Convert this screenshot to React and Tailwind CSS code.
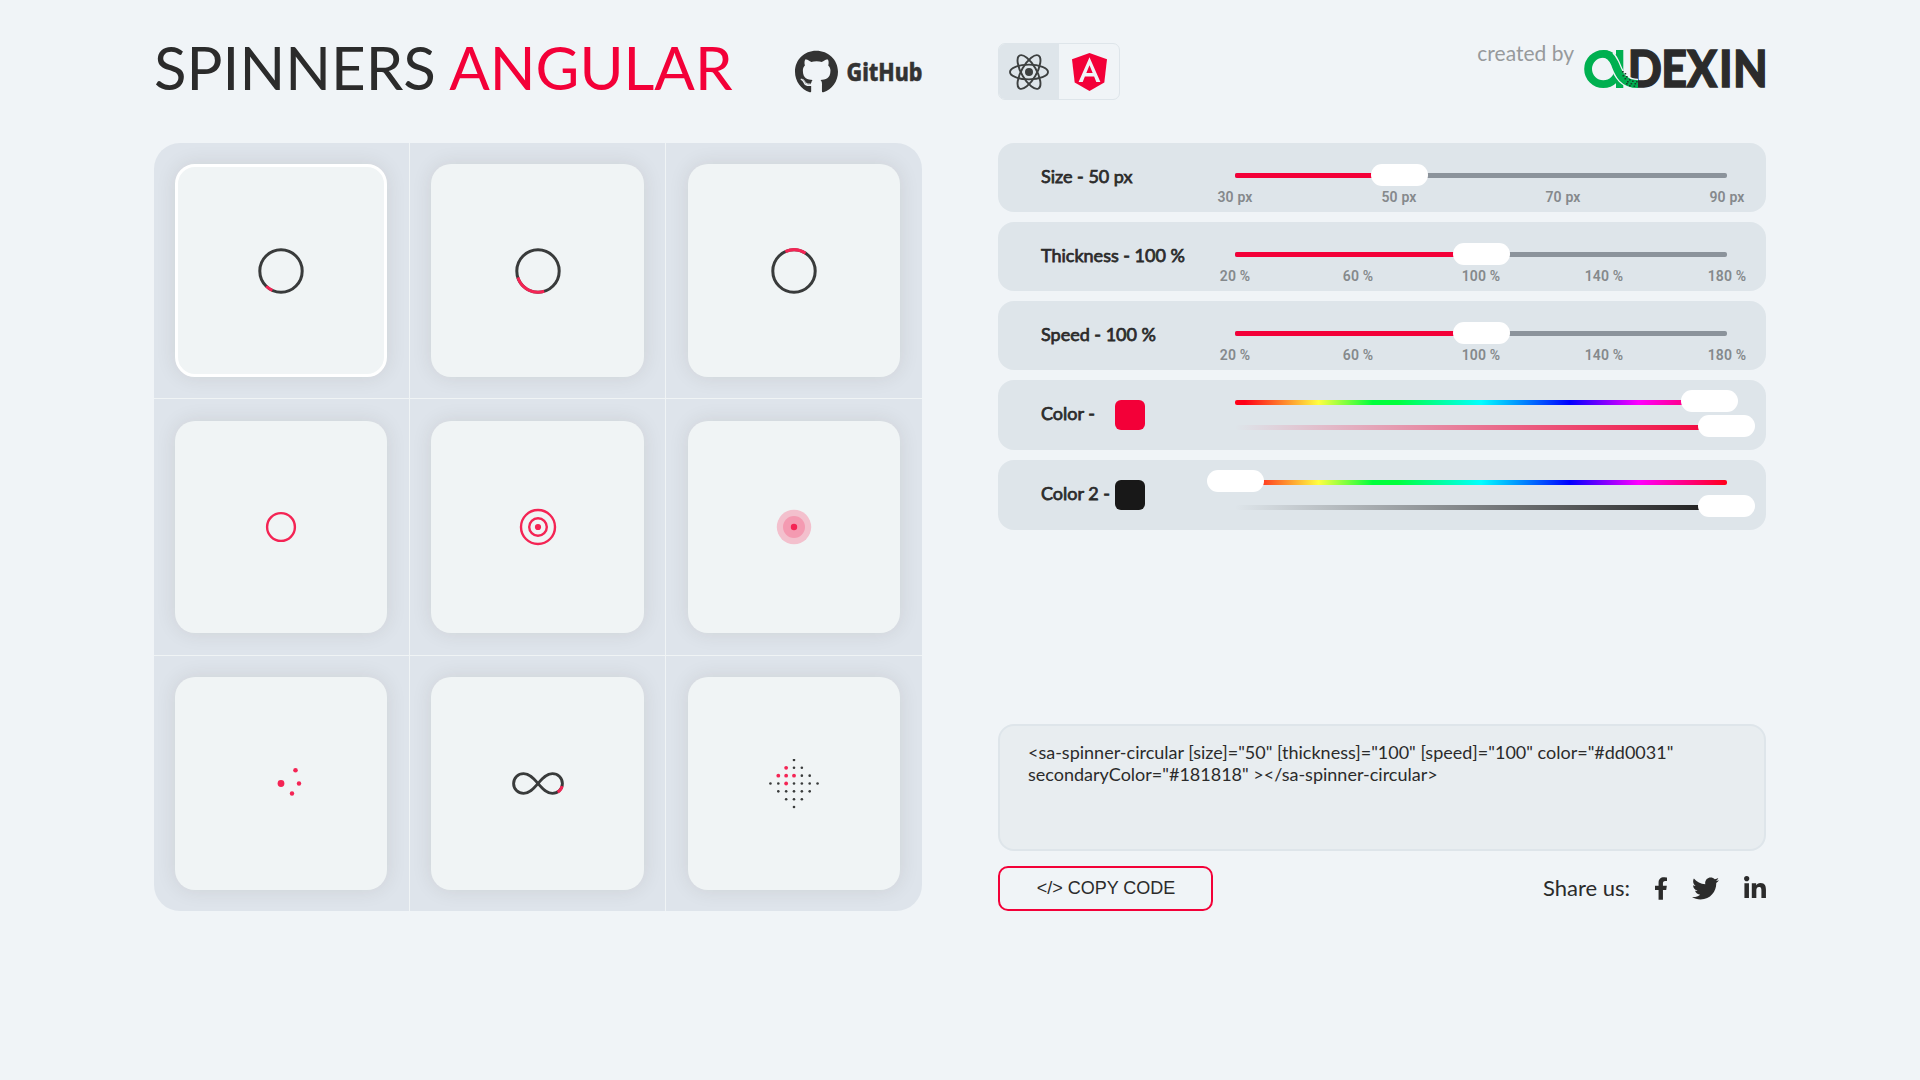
import React from "react";
import { FaFacebookF, FaLinkedinIn, FaTwitter, FaGithub } from "react-icons/fa";

const RED = "#f42454";
const DARK = "#393b3b";

const rad = (d) => (d * Math.PI) / 180;

function Ring({ from, to }) {
  const r = 21.2;
  const x1 = 25 + r * Math.cos(rad(from));
  const y1 = 25 + r * Math.sin(rad(from));
  const x2 = 25 + r * Math.cos(rad(to));
  const y2 = 25 + r * Math.sin(rad(to));
  return (
    <svg width="50" height="50" viewBox="0 0 50 50" fill="none" strokeWidth="3">
      <circle cx="25" cy="25" r={r} stroke={DARK} />
      <path d={`M${x1} ${y1}A${r} ${r} 0 0 1 ${x2} ${y2}`} stroke={RED} />
    </svg>
  );
}

function DotMatrix() {
  const red = ["-1,-2", "-2,-1", "-1,-1", "0,-1", "-1,0"];
  const dots = [];
  for (let y = -3; y <= 3; y++) {
    for (let x = -3; x <= 3; x++) {
      if (Math.abs(x) + Math.abs(y) <= 3) dots.push([x, y]);
    }
  }
  return (
    <svg width="50" height="50" viewBox="-25 -24.5 50 50">
      {dots.map(([x, y]) => {
        const on = red.includes(`${x},${y}`);
        return <circle key={`${x},${y}`} cx={x * 7.85} cy={y * 7.85} r={on ? 1.9 : 1.3} fill={on ? RED : DARK} />;
      })}
    </svg>
  );
}

const spinners = [
  <Ring from={114} to={134} />,
  <Ring from={73} to={162} />,
  <Ring from={246} to={303} />,
  <svg width="50" height="50" viewBox="-25 -25 50 50" fill="none">
    <circle r="13.9" stroke={RED} strokeWidth="2.4" />
  </svg>,
  <svg width="50" height="50" viewBox="-25 -25 50 50" fill="none" stroke={RED} strokeWidth="2.4">
    <circle r="17" />
    <circle r="8.8" />
    <circle r="3.1" fill={RED} stroke="none" />
  </svg>,
  <svg width="50" height="50" viewBox="-25 -25 50 50">
    <circle r="17.2" fill="#f3c0cd" />
    <circle r="11" fill="#f49ab1" />
    <circle r="3.2" fill={RED} />
  </svg>,
  <svg width="50" height="50" viewBox="-25 -24.5 50 50" fill={RED}>
    <circle r="3.4" />
    <circle cx="14.5" cy="-13.3" r="2.3" />
    <circle cx="18" cy="0" r="2.2" />
    <circle cx="11" cy="10" r="2.2" />
  </svg>,
  <svg className="overflow-visible" width="50" height="50" viewBox="-25 -24.5 50 50" fill="none" strokeWidth="2.9">
    <path
      d="M0 0C-4 -4.5 -8 -9.9 -14.4 -9.9C-20 -9.9 -24.4 -5.5 -24.4 0C-24.4 5.5 -20 9.9 -14.4 9.9C-8 9.9 -4 4.5 0 0C4 -4.5 8 -9.9 14.4 -9.9C20 -9.9 24.4 -5.5 24.4 0C24.4 5.5 20 9.9 14.4 9.9C8 9.9 4 4.5 0 0Z"
      stroke={DARK}
    />
    <path d="M24.1 2.6C23.5 5.2 22 7.3 19.6 8.6" stroke={RED} />
  </svg>,
  <DotMatrix />,
];

const cellCols = ["border-r pr-px", "border-r", ""];
const cellRows = ["border-b", "border-b", ""];
const cardWidths = ["w-[212px]", "w-[213px]", "w-[212px]"];
const cardHeights = ["h-[213px]", "h-[212px]", "h-[213px]"];

function Cell({ i }) {
  const col = i % 3;
  const row = Math.floor(i / 3);
  return (
    <div className={`flex items-center justify-center border-[#f0f4f5] ${cellCols[col]} ${cellRows[row]}`}>
      <div
        className={`flex items-center justify-center rounded-[20px] bg-[#f0f4f5] shadow-[0_0_20px_rgba(60,50,40,0.1)] ${cardWidths[col]} ${cardHeights[row]} ${i === 0 ? "border-[3px] border-white" : ""}`}
      >
        {spinners[i]}
      </div>
    </div>
  );
}

function Handle({ left, top }) {
  return <div className="absolute h-[22px] w-[57px] rounded-[11px] bg-white" style={{ left, top }} />;
}

function Slider({ at, left, ticks }) {
  return (
    <div className="flex w-[492px] flex-col pt-[30px]">
      <div className="relative h-[5px] rounded-[2px] bg-[#8b939b]">
        <div className="h-full rounded-[2px] bg-[#f30038]" style={{ width: `${at}%` }} />
        <Handle left={left} top={-9} />
      </div>
      <div className="mt-[10px] flex justify-between">
        {ticks.map((t) => (
          <span key={t} className="flex w-0 justify-center whitespace-nowrap font-['Roboto',sans-serif] text-[14px] leading-[18px] font-semibold tracking-[0.15px] text-[#85898c]">
            {t}
          </span>
        ))}
      </div>
    </div>
  );
}

function Label({ children }) {
  return (
    <span className="text-[18px] leading-[22px] whitespace-pre text-[#2b2b2b] [-webkit-text-stroke:0.75px_#2b2b2b]">
      {children}
    </span>
  );
}

function SliderRow({ label, at, left, ticks }) {
  return (
    <div className="flex h-[69px] justify-between rounded-[16px] bg-[#dee5ea] pr-[39px] pl-[43px]">
      <div className="pt-[22px]">
        <Label>{label}</Label>
      </div>
      <Slider at={at} left={left} ticks={ticks} />
    </div>
  );
}

function ColorRow({ label, swatch, left, fade }) {
  return (
    <div className="flex h-[70px] justify-between rounded-[16px] bg-[#dee5ea] pr-[39px] pl-[43px]">
      <div className="flex pt-5">
        <div className="w-[74px] pt-[2px]">
          <Label>{label}</Label>
        </div>
        <div className={`h-[30px] w-[30px] rounded-[6px] ${swatch}`} />
      </div>
      <div className="flex w-[492px] flex-col gap-5 pt-5">
        <div className="relative h-[5px] rounded-[2px] bg-[linear-gradient(90deg,#ff0018_0%,#ff0018_2%,#ffff40_17%,#00ff3c_28%,#00ff3c_33%,#00ffff_50%,#0000ff_68%,#ff00ff_82%,#ff0018_100%)]">
          <Handle left={left} top={-10} />
        </div>
        <div className={`relative h-[5px] rounded-[2px] ${fade}`}>
          <Handle left={463} top={-10} />
        </div>
      </div>
    </div>
  );
}

const speckles = [
  [38, 21], [40.5, 23], [38.5, 25], [42, 26], [40.5, 28], [45, 29], [43, 31],
  [48, 30.5], [46.5, 33], [50.5, 33], [45, 35], [49.5, 35.5], [52, 31], [42, 33],
];

function AdexinLogo() {
  return (
    <svg width="182" height="38" viewBox="0 0 182 38" className="overflow-visible">
      <text
        transform="scale(0.88 1)"
        x="49.6 87.8 116.8 153.3 169.3"
        y="37.4"
        fontFamily="Lato, sans-serif"
        fontWeight="900"
        fontSize="51"
        fill="#2b2b2b"
        stroke="#2b2b2b"
        strokeWidth="1.3"
      >
        DEXIN
      </text>
      <circle cx="19.3" cy="19" r="15.2" fill="none" stroke="#00b050" strokeWidth="7.8" />
      <path d="M32 0H39.3V38H32Z" fill="#00b050" />
      <path d="M26 6C29 9 30.5 13 32.5 18C36 27 42 34 54 34" fill="none" stroke="#f0f4f7" strokeWidth="10.4" />
      <path
        d="M19.3 3.8C24 3.8 28 7.5 30.5 13C34 21 37 34.1 54 34.1"
        fill="none"
        stroke="#00b050"
        strokeWidth="7.8"
      />
      <g fill="#17402a">
        {speckles.map(([x, y]) => (
          <rect key={`${x}-${y}`} x={x} y={y} width="1.7" height="1.5" />
        ))}
      </g>
    </svg>
  );
}

function ReactIcon() {
  return (
    <svg width="40" height="38" viewBox="-20 -19 40 38" fill="none" stroke="#3d4040" strokeWidth="1.9">
      <ellipse rx="19" ry="7.4" />
      <ellipse rx="19" ry="7.4" transform="rotate(60)" />
      <ellipse rx="19" ry="7.4" transform="rotate(120)" />
      <circle r="4" fill="#3d4040" stroke="none" />
    </svg>
  );
}

function AngularIcon() {
  return (
    <svg width="35" height="38" viewBox="0 0 35 38">
      <path d="M17.5 0L35 6.2L32.3 29.5L17.5 38L2.7 29.5L0 6.2Z" fill="#f30038" />
      <path d="M17.5 4.3L6.6 29H10.7L12.9 23.4H22.1L24.3 29H28.4ZM17.5 12.2L20.7 20H14.3Z" fill="#f0f4f7" fillRule="evenodd" />
    </svg>
  );
}

const percent = ["20 %", "60 %", "100 %", "140 %", "180 %"];

export default function App() {
  return (
    <div className="h-[1080px] w-[1920px] overflow-hidden bg-[#f0f4f7] font-['Lato',sans-serif] text-[#2b2b2b]">
      <div className="flex gap-[76px] pl-[154px]">
        <div className="w-[768px]">
          <header className="flex h-[143px] items-start justify-between">
            <h1 className="pt-[31px] text-[60px] leading-[72px] whitespace-nowrap">
              SPINNERS <span className="text-[#f30038]">ANGULAR</span>
            </h1>
            <div className="flex gap-[9px] pt-[50px]">
              <FaGithub className="h-[44px] w-[43px] text-[#333333]" preserveAspectRatio="none" />
              <svg width="75" height="44" viewBox="0 0 75 44" className="overflow-visible">
                <text
                  x="-0.5"
                  y="31"
                  textLength="76"
                  lengthAdjust="spacingAndGlyphs"
                  fontFamily="Noto Sans, sans-serif"
                  fontWeight="800"
                  fontSize="25.5"
                  fill="#333333"
                  stroke="#333333"
                  strokeWidth="0.5"
                >
                  GitHub
                </text>
              </svg>
            </div>
          </header>
          <div className="grid h-[768px] grid-cols-[256px_256px_256px] grid-rows-[256px_257px_255px] overflow-hidden rounded-[26px] bg-[#dee4eb]">
            {spinners.map((_, i) => (
              <Cell key={i} i={i} />
            ))}
          </div>
        </div>

        <div className="flex w-[768px] flex-col">
          <header className="flex h-[143px] items-start justify-between pt-[43px]">
            <div className="flex h-[57px] w-[122px] overflow-hidden rounded-[7px] border border-[#dee5ea]">
              <div className="flex w-[60px] items-center justify-center bg-[#dee5ea]">
                <ReactIcon />
              </div>
              <div className="flex w-[60px] items-center justify-center">
                <AngularIcon />
              </div>
            </div>
            <div className="flex gap-[10px]">
              <span className="-mt-[2px] text-[21px] leading-6 text-[#979a9c]">created by</span>
              <div className="pt-[7px]">
                <AdexinLogo />
              </div>
            </div>
          </header>
          <div className="flex flex-col gap-[10px]">
            <SliderRow label="Size - 50 px" at={33.33} left={136} ticks={["30 px", "50 px", "70 px", "90 px"]} />
            <SliderRow label="Thickness - 100 %" at={50} left={218} ticks={percent} />
            <SliderRow label="Speed - 100 %" at={50} left={218} ticks={percent} />
            <ColorRow label="Color -" swatch="bg-[#f30038]" left={446} fade="bg-[linear-gradient(90deg,#f3003800,#f30038)]" />
            <ColorRow label="Color 2 -" swatch="bg-[#181818]" left={-28} fade="bg-[linear-gradient(90deg,#18181800,#181818)]" />
          </div>
          <div className="mt-[194px] h-[127px] rounded-[16px] border-2 border-[#dee5ea] bg-[#e8edf0] pt-[15px] pl-[28px] text-[18px] leading-[22px]">
            <div className="whitespace-nowrap">{'<sa-spinner-circular [size]="50" [thickness]="100" [speed]="100" color="#dd0031"'}</div>
            <div className="whitespace-nowrap">{'secondaryColor="#181818" ></sa-spinner-circular>'}</div>
          </div>
          <div className="mt-[15px] flex items-center justify-between">
            <button className="h-[45px] w-[215px] rounded-[10px] border-2 border-[#f30038] pl-px font-['Liberation_Sans',sans-serif] text-[18px] whitespace-nowrap">
              {"</> COPY CODE"}
            </button>
            <div className="flex items-center">
              <span className="-mt-[2px] text-[22px] leading-[26px] whitespace-nowrap">Share us:</span>
              <FaFacebookF className="ml-[24px] h-[23px] w-[14px]" />
              <FaTwitter className="ml-[24px] h-[27px] w-[27px]" />
              <FaLinkedinIn className="ml-[25px] h-[25px] w-[22px]" />
            </div>
          </div>
        </div>
      </div>
    </div>
  );
}
